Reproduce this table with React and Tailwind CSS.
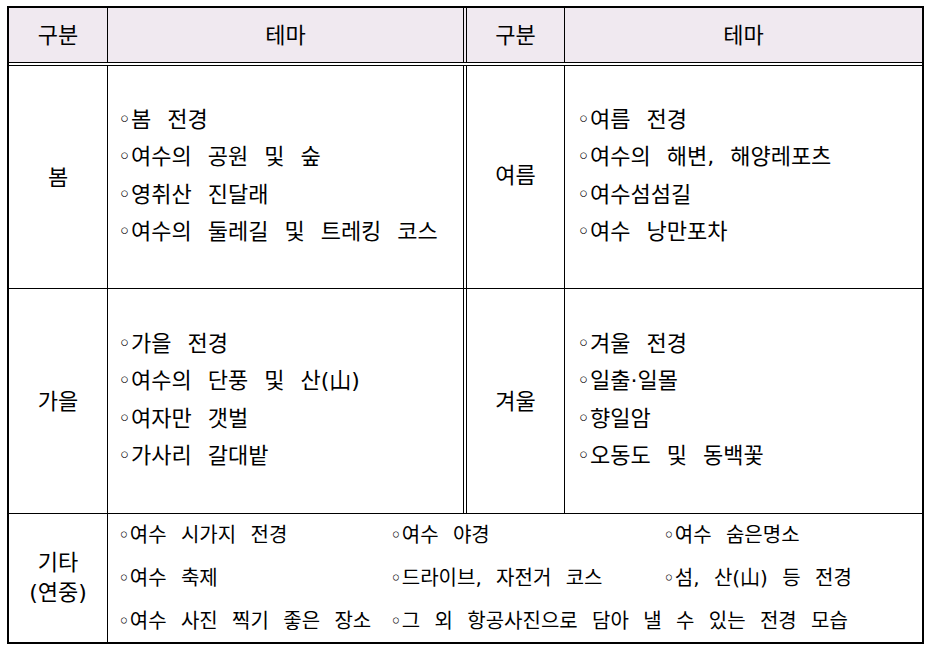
const font = { fontFamily: '"DejaVu Sans", "Noto Sans CJK KR", sans-serif' }

function Item({ children, className = '' }) {
  return <div className={`whitespace-nowrap ${className}`}>◦{children}</div>
}

function List({ items, pl }) {
  return (
    <div className={`flex flex-col justify-center pb-[3px] text-[22px] leading-[37.5px] [word-spacing:9px] ${pl}`}>
      {items.map((t) => (
        <Item key={t}>{t}</Item>
      ))}
    </div>
  )
}

function App() {
  const spring = ['봄 전경', '여수의 공원 및 숲', '영취산 진달래', '여수의 둘레길 및 트레킹 코스']
  const summer = ['여름 전경', '여수의 해변, 해양레포츠', '여수섬섬길', '여수 낭만포차']
  const autumn = ['가을 전경', '여수의 단풍 및 산(山)', '여자만 갯벌', '가사리 갈대밭']
  const winter = ['겨울 전경', '일출·일몰', '향일암', '오동도 및 동백꽃']

  return (
    <div className="min-h-screen bg-white pt-[6px] pl-[7px] text-black" style={font}>
      <div className="flex w-[917px] flex-col border-2 border-black">
        {/* header */}
        <div className="flex h-[54px] bg-[#f0e9f0] text-[22px]">
          <div className="flex w-[99px] items-center justify-center border-r border-black">구분</div>
          <div className="flex w-[356px] items-center justify-center border-r border-black">테마</div>
          <div className="w-[2px]" />
          <div className="flex w-[99px] items-center justify-center border-x border-black">구분</div>
          <div className="flex flex-1 items-center justify-center">테마</div>
        </div>
        <div className="h-px bg-black" />
        <div className="h-[2px]" />
        <div className="h-px bg-black" />

        {/* spring / summer */}
        <div className="flex h-[223px] border-b border-black">
          <div className="flex w-[99px] items-center justify-center border-r border-black text-[22px]">봄</div>
          <div className="flex w-[356px] border-r border-black">
            <List items={spring} pl="pl-[10px]" />
          </div>
          <div className="w-[2px]" />
          <div className="flex w-[99px] items-center justify-center border-x border-black pb-[3px] text-[22px]">여름</div>
          <div className="flex flex-1">
            <List items={summer} pl="pl-[12px]" />
          </div>
        </div>

        {/* autumn / winter */}
        <div className="flex h-[225px] border-b border-black">
          <div className="flex w-[99px] items-center justify-center border-r border-black text-[22px]">가을</div>
          <div className="flex w-[356px] border-r border-black">
            <List items={autumn} pl="pl-[10px]" />
          </div>
          <div className="w-[2px]" />
          <div className="flex w-[99px] items-center justify-center border-x border-black text-[22px]">겨울</div>
          <div className="flex flex-1">
            <List items={winter} pl="pl-[12px]" />
          </div>
        </div>

        {/* etc */}
        <div className="flex h-[128px]">
          <div className="flex w-[99px] flex-col items-center justify-center border-r border-black text-[22px] leading-[30px]">
            <span>기타</span>
            <span>(연중)</span>
          </div>
          <div className="grid flex-1 grid-cols-[272px_273px_1fr] content-center pl-[10px] text-[20px] leading-[43px] [word-spacing:8px]">
            <Item>여수 시가지 전경</Item>
            <Item>여수 야경</Item>
            <Item>여수 숨은명소</Item>
            <Item>여수 축제</Item>
            <Item>드라이브, 자전거 코스</Item>
            <Item>섬, 산(山) 등 전경</Item>
            <Item>여수 사진 찍기 좋은 장소</Item>
            <Item className="col-span-2">그 외 항공사진으로 담아 낼 수 있는 전경 모습</Item>
          </div>
        </div>
      </div>
    </div>
  )
}

export default App
